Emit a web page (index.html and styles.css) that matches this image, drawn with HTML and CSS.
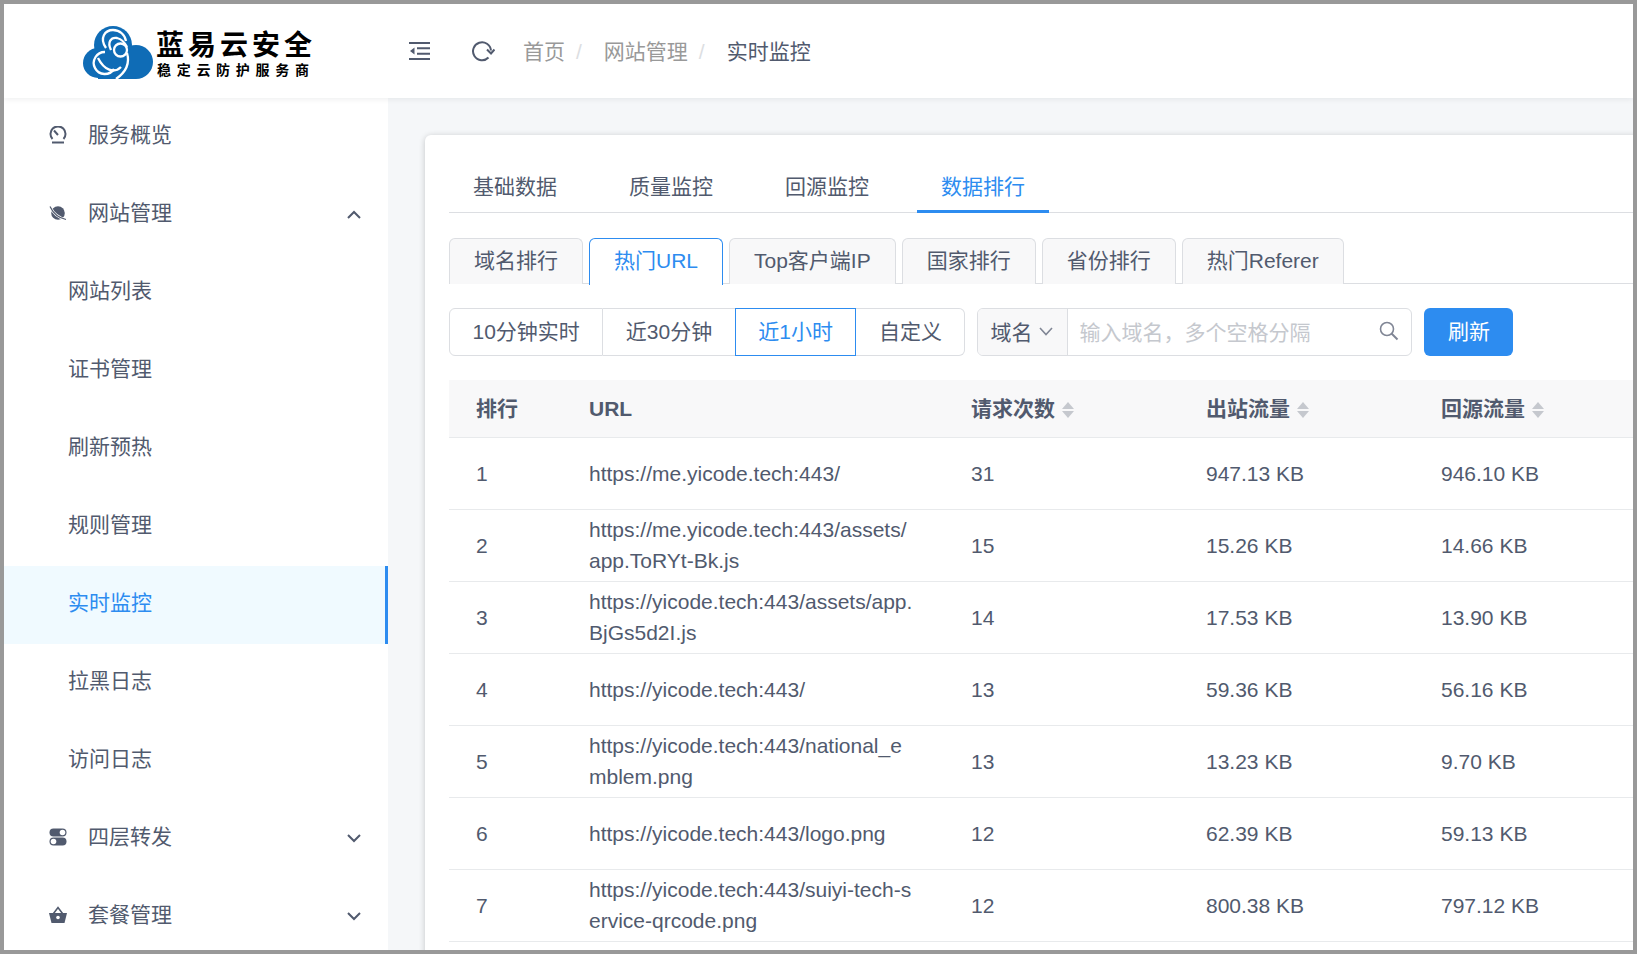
FILE: index.html

```html
<!DOCTYPE html>
<html lang="zh-CN">
<head>
<meta charset="utf-8">
<title>实时监控</title>
<link rel="stylesheet" href="styles.css">
</head>
<body>
<div class="frame">

  <header class="topbar">
    <div class="brand">
      <svg class="brand-logo" width="76" height="65" viewBox="0 0 76 65">
        <g fill="#0f6cb6">
          <circle cx="33" cy="25" r="19"/>
          <circle cx="18" cy="43" r="15"/>
          <circle cx="56" cy="42" r="17"/>
          <rect x="18" y="36" width="38" height="23"/>
        </g>
        <g fill="none" stroke="#fff" stroke-width="2.300">
          <path d="M25 32A11 11 0 1 0 34 49"/>
          <path d="M18 38C24 50 34 54 41 47"/>
          <path d="M26 28C19 18 25 10 33 10C40 10 45 15 46 21"/>
          <path d="M31 30C27 22 31 17 37 18C41 19 44 21 47 27"/>
          <path d="M47 33C50 43 46 52 36 59"/>
          <circle cx="40.500" cy="30" r="6.500"/>
        </g>
        <circle cx="40.500" cy="30" r="3" fill="#0f6cb6"/>
      </svg>
      <div class="brand-text">
        <div class="brand-name">蓝易云安全</div>
        <div class="brand-slogan">稳定云防护服务商</div>
      </div>
    </div>
    <svg class="tool-icon" width="22" height="20" viewBox="0 0 22 20">
      <g fill="none" stroke="#515a6e" stroke-width="2">
        <path d="M0 2H21M8 7.300H21M8 12.700H21M0 18H21"/>
      </g>
      <path d="M1 10L5.500 6.500V13.500Z" fill="#515a6e"/>
    </svg>
    <svg class="tool-icon refresh" width="24" height="22" viewBox="0 0 24 22">
      <path d="M17.500 17.500A9 9 0 1 1 20 10.500" fill="none" stroke="#515a6e" stroke-width="2"/>
      <path d="M16 9.500L20 13.500L23.500 9.500" fill="none" stroke="#515a6e" stroke-width="2"/>
    </svg>
    <nav class="crumbs">
      <span class="crumb">首页</span><span class="crumb-sep">/</span>
      <span class="crumb">网站管理</span><span class="crumb-sep">/</span>
      <span class="crumb crumb-last">实时监控</span>
    </nav>
  </header>

  <div class="main">
    <aside class="sidebar">
      <div class="menu-item">
        <svg class="menu-icon" width="18" height="18" viewBox="0 0 18 18">
          <path d="M3.500 13A7.500 7.500 0 1 1 14.500 13" fill="none" stroke="#515a6e" stroke-width="2"/>
          <path d="M5 4.500L9 9" stroke="#515a6e" stroke-width="2"/>
          <path d="M3 16.500H15" stroke="#515a6e" stroke-width="2"/>
        </svg>
        <span>服务概览</span>
      </div>
      <div class="menu-item">
        <svg class="menu-icon" width="18" height="18" viewBox="0 0 18 18">
          <circle cx="9" cy="9" r="6.800" fill="#515a6e"/>
          <path d="M1 2.500C4 9 10 14 17 15.500" stroke="#fff" stroke-width="2.600" fill="none"/>
          <path d="M1 2.500C4 9 10 14 17 15.500" stroke="#515a6e" stroke-width="1.200" fill="none"/>
        </svg>
        <span>网站管理</span>
        <svg class="menu-arrow" width="14" height="9" viewBox="0 0 14 9"><path d="M1 8L7 2L13 8" fill="none" stroke="#515a6e" stroke-width="2"/></svg>
      </div>
      <div class="menu-item sub">网站列表</div>
      <div class="menu-item sub">证书管理</div>
      <div class="menu-item sub">刷新预热</div>
      <div class="menu-item sub">规则管理</div>
      <div class="menu-item sub active">实时监控</div>
      <div class="menu-item sub">拉黑日志</div>
      <div class="menu-item sub">访问日志</div>
      <div class="menu-item">
        <svg class="menu-icon" width="18" height="18" viewBox="0 0 18 18">
          <rect x="0.500" y="0.500" width="17" height="8" rx="4" fill="#515a6e"/>
          <circle cx="13.500" cy="4.500" r="2.800" fill="#fff"/>
          <rect x="0.500" y="9.500" width="17" height="8" rx="4" fill="#515a6e"/>
          <circle cx="4.500" cy="13.500" r="2.800" fill="#fff"/>
        </svg>
        <span>四层转发</span>
        <svg class="menu-arrow" width="14" height="9" viewBox="0 0 14 9"><path d="M1 1L7 7L13 1" fill="none" stroke="#515a6e" stroke-width="2"/></svg>
      </div>
      <div class="menu-item">
        <svg class="menu-icon" width="18" height="18" viewBox="0 0 18 18">
          <path d="M0 7H18L15.500 17H2.500Z" fill="#515a6e"/>
          <path d="M4.500 7.500L9 1.500L13.500 7.500" fill="none" stroke="#515a6e" stroke-width="1.600"/>
          <circle cx="9" cy="11.500" r="1.800" fill="#fff"/>
        </svg>
        <span>套餐管理</span>
        <svg class="menu-arrow" width="14" height="9" viewBox="0 0 14 9"><path d="M1 1L7 7L13 1" fill="none" stroke="#515a6e" stroke-width="2"/></svg>
      </div>
    </aside>

    <section class="content">
      <div class="card">
        <div class="tabs">
          <div class="tab">基础数据</div>
          <div class="tab">质量监控</div>
          <div class="tab">回源监控</div>
          <div class="tab tab-on">数据排行</div>
        </div>

        <div class="subtabs">
          <div class="subtab">域名排行</div>
          <div class="subtab subtab-on">热门URL</div>
          <div class="subtab">Top客户端IP</div>
          <div class="subtab">国家排行</div>
          <div class="subtab">省份排行</div>
          <div class="subtab">热门Referer</div>
        </div>

        <div class="filters">
          <div class="btn-group">
            <div class="range">10分钟实时</div>
            <div class="range">近30分钟</div>
            <div class="range range-on">近1小时</div>
            <div class="range">自定义</div>
          </div>
          <div class="search">
            <div class="search-type">
              域名
              <svg width="14" height="9" viewBox="0 0 14 9"><path d="M1 1L7 7.500L13 1" fill="none" stroke="#808695" stroke-width="1.600"/></svg>
            </div>
            <div class="search-input">
              <span class="placeholder">输入域名，多个空格分隔</span>
              <svg width="20" height="20" viewBox="0 0 20 20">
                <circle cx="8" cy="8" r="6.500" fill="none" stroke="#808695" stroke-width="1.600"/>
                <path d="M12.500 12.500L18.500 18.500" stroke="#808695" stroke-width="2"/>
              </svg>
            </div>
          </div>
          <div class="refresh-btn">刷新</div>
        </div>

        <table class="rank-table">
          <colgroup>
            <col class="col-rank">
            <col class="col-url">
            <col class="col-num">
            <col class="col-num">
            <col class="col-num">
          </colgroup>
          <thead>
            <tr>
              <th>排行</th>
              <th>URL</th>
              <th>请求次数<span class="sort"><i class="up"></i><i class="down"></i></span></th>
              <th>出站流量<span class="sort"><i class="up"></i><i class="down"></i></span></th>
              <th>回源流量<span class="sort"><i class="up"></i><i class="down"></i></span></th>
            </tr>
          </thead>
          <tbody>
            <tr><td>1</td><td>https://me.yicode.tech:443/</td><td>31</td><td>947.13 KB</td><td>946.10 KB</td></tr>
            <tr><td>2</td><td>https://me.yicode.tech:443/assets/app.ToRYt-Bk.js</td><td>15</td><td>15.26 KB</td><td>14.66 KB</td></tr>
            <tr><td>3</td><td>https://yicode.tech:443/assets/app.BjGs5d2I.js</td><td>14</td><td>17.53 KB</td><td>13.90 KB</td></tr>
            <tr><td>4</td><td>https://yicode.tech:443/</td><td>13</td><td>59.36 KB</td><td>56.16 KB</td></tr>
            <tr><td>5</td><td>https://yicode.tech:443/national_emblem.png</td><td>13</td><td>13.23 KB</td><td>9.70 KB</td></tr>
            <tr><td>6</td><td>https://yicode.tech:443/logo.png</td><td>12</td><td>62.39 KB</td><td>59.13 KB</td></tr>
            <tr><td>7</td><td>https://yicode.tech:443/suiyi-tech-service-qrcode.png</td><td>12</td><td>800.38 KB</td><td>797.12 KB</td></tr>
          </tbody>
        </table>
      </div>
    </section>
  </div>

</div>
</body>
</html>
```

FILE: styles.css

```css
html, body {
    margin: 0;
    padding: 0;
    overflow: hidden;
}

body {
    font-family: "Liberation Sans", "Noto Sans CJK SC", sans-serif;
    font-size: 21px;
    color: #515a6e;
    background: #fff;
}

.frame {
    box-sizing: border-box;
    width: 1637px;
    height: 954px;
    border: 4px solid #999;
    display: flex;
    flex-direction: column;
    overflow: hidden;
}

/* top bar */
.topbar {
    position: relative;
    z-index: 2;
    flex: none;
    height: 94px;
    display: flex;
    align-items: center;
    background: #fff;
    box-shadow: 0 1px 6px rgba(0, 21, 41, 0.08);
}

.brand {
    box-sizing: border-box;
    width: 405px;
    padding-left: 76px;
    display: flex;
    align-items: center;
}

.brand-logo {
    flex: none;
    margin-top: 3px;
}

.brand-text {
    margin-top: 7px;
    color: #000;
    font-weight: 700;
}

.brand-name {
    font-size: 28px;
    line-height: 31px;
    letter-spacing: 4px;
}

.brand-slogan {
    font-size: 14px;
    line-height: 18px;
    letter-spacing: 5.7px;
    margin-left: 1px;
}

.tool-icon {
    flex: none;
}

.tool-icon.refresh {
    margin-left: 40px;
}

.crumbs {
    margin-left: 28px;
    display: flex;
    align-items: center;
    line-height: 32px;
    margin-top: 2px;
}

.crumb {
    color: #999;
}

.crumb-last {
    color: #515a6e;
}

.crumb-sep {
    color: #dcdee2;
    padding: 0 22px 0 11px;
}

/* sidebar */
.main {
    flex: 1;
    min-height: 0;
    display: flex;
}

.sidebar {
    flex: none;
    width: 384px;
    background: #fff;
}

.menu-item {
    box-sizing: border-box;
    height: 78px;
    padding: 0 27px 5px 45px;
    display: flex;
    align-items: center;
    line-height: 32px;
}

.menu-icon {
    flex: none;
    margin-right: 21px;
}

.menu-arrow {
    flex: none;
    margin-left: auto;
    margin-top: 4px;
}

.menu-item.sub {
    padding-left: 64px;
}

.menu-item.active {
    color: #2d8cf0;
    background: #f0faff;
    border-right: 3px solid #2d8cf0;
}

/* content */
.content {
    flex: 1;
    min-width: 0;
    background: #f5f7f9;
    padding: 37px 0 0 37px;
}

.card {
    box-sizing: border-box;
    width: 1300px;
    height: 900px;
    padding: 24px;
    background: #fff;
    border-radius: 6px;
    box-shadow: 0 1px 6px rgba(0, 0, 0, 0.2);
}

.tabs {
    display: flex;
    height: 54px;
    border-bottom: 1px solid #dcdee2;
    box-sizing: border-box;
}

.tab {
    padding: 0 24px;
    margin-right: 24px;
    line-height: 56px;
}

.tab-on {
    color: #2d8cf0;
    height: 54px;
    box-sizing: border-box;
    border-bottom: 3px solid #2d8cf0;
}

.subtabs {
    display: flex;
    gap: 6px;
    height: 46px;
    margin-top: 25px;
    border-bottom: 1px solid #dcdee2;
    box-sizing: border-box;
}

.subtab {
    box-sizing: border-box;
    height: 46px;
    padding: 0 24px;
    line-height: 44px;
    background: #f8f8f9;
    border: 1px solid #dcdee2;
    border-bottom: 0;
    border-radius: 6px 6px 0 0;
}

.subtab-on {
    height: 47px;
    color: #2d8cf0;
    background: #fff;
    border-color: #2d8cf0;
}

.filters {
    display: flex;
    gap: 12px;
    margin-top: 24px;
    height: 48px;
}

.btn-group {
    display: flex;
}

.range {
    box-sizing: border-box;
    height: 48px;
    padding: 0 22.500px;
    line-height: 46px;
    border: 1px solid #dcdee2;
    border-left-width: 0;
}

.range:first-child {
    border-left-width: 1px;
    border-radius: 6px 0 0 6px;
}

.range:last-child {
    border-radius: 0 6px 6px 0;
}

.range-on {
    color: #2d8cf0;
    border: 1px solid #2d8cf0;
    margin-left: -1px;
}

.search {
    display: flex;
    box-sizing: border-box;
    width: 435px;
    height: 48px;
    border: 1px solid #dcdee2;
    border-radius: 6px;
    overflow: hidden;
}

.search-type {
    flex: none;
    box-sizing: border-box;
    width: 90px;
    padding: 0 0 2px 12px;
    display: flex;
    align-items: center;
    gap: 7px;
    background: #f8f8f9;
    border-right: 1px solid #dcdee2;
}

.search-input {
    flex: 1;
    display: flex;
    align-items: center;
    justify-content: space-between;
    padding: 0 12px 2px 11px;
}

.placeholder {
    color: #c5c8ce;
}

.refresh-btn {
    width: 89px;
    height: 48px;
    line-height: 48px;
    text-align: center;
    color: #fff;
    background: #2d8cf0;
    border-radius: 6px;
}

/* table */
.rank-table {
    table-layout: fixed;
    width: 1199px;
    margin-top: 24px;
    border-collapse: collapse;
}

.col-rank { width: 113px; }
.col-url { width: 382px; }
.col-num { width: 235px; }

.rank-table th,
.rank-table td {
    padding: 0 27px 1px;
    text-align: left;
    line-height: 31px;
    border-bottom: 1px solid #e8eaec;
}

.rank-table th {
    height: 56px;
    font-weight: 700;
    background: #f8f8f9;
}

.rank-table td {
    height: 70px;
    word-break: break-all;
}

.sort {
    display: inline-block;
    vertical-align: middle;
    margin-left: 7px;
    width: 12px;
}

.sort i {
    display: block;
    width: 0;
    height: 0;
    border-left: 6px solid transparent;
    border-right: 6px solid transparent;
}

.sort .up {
    border-bottom: 7px solid #c5c8ce;
    margin-bottom: 2px;
}

.sort .down {
    border-top: 7px solid #c5c8ce;
}
```
